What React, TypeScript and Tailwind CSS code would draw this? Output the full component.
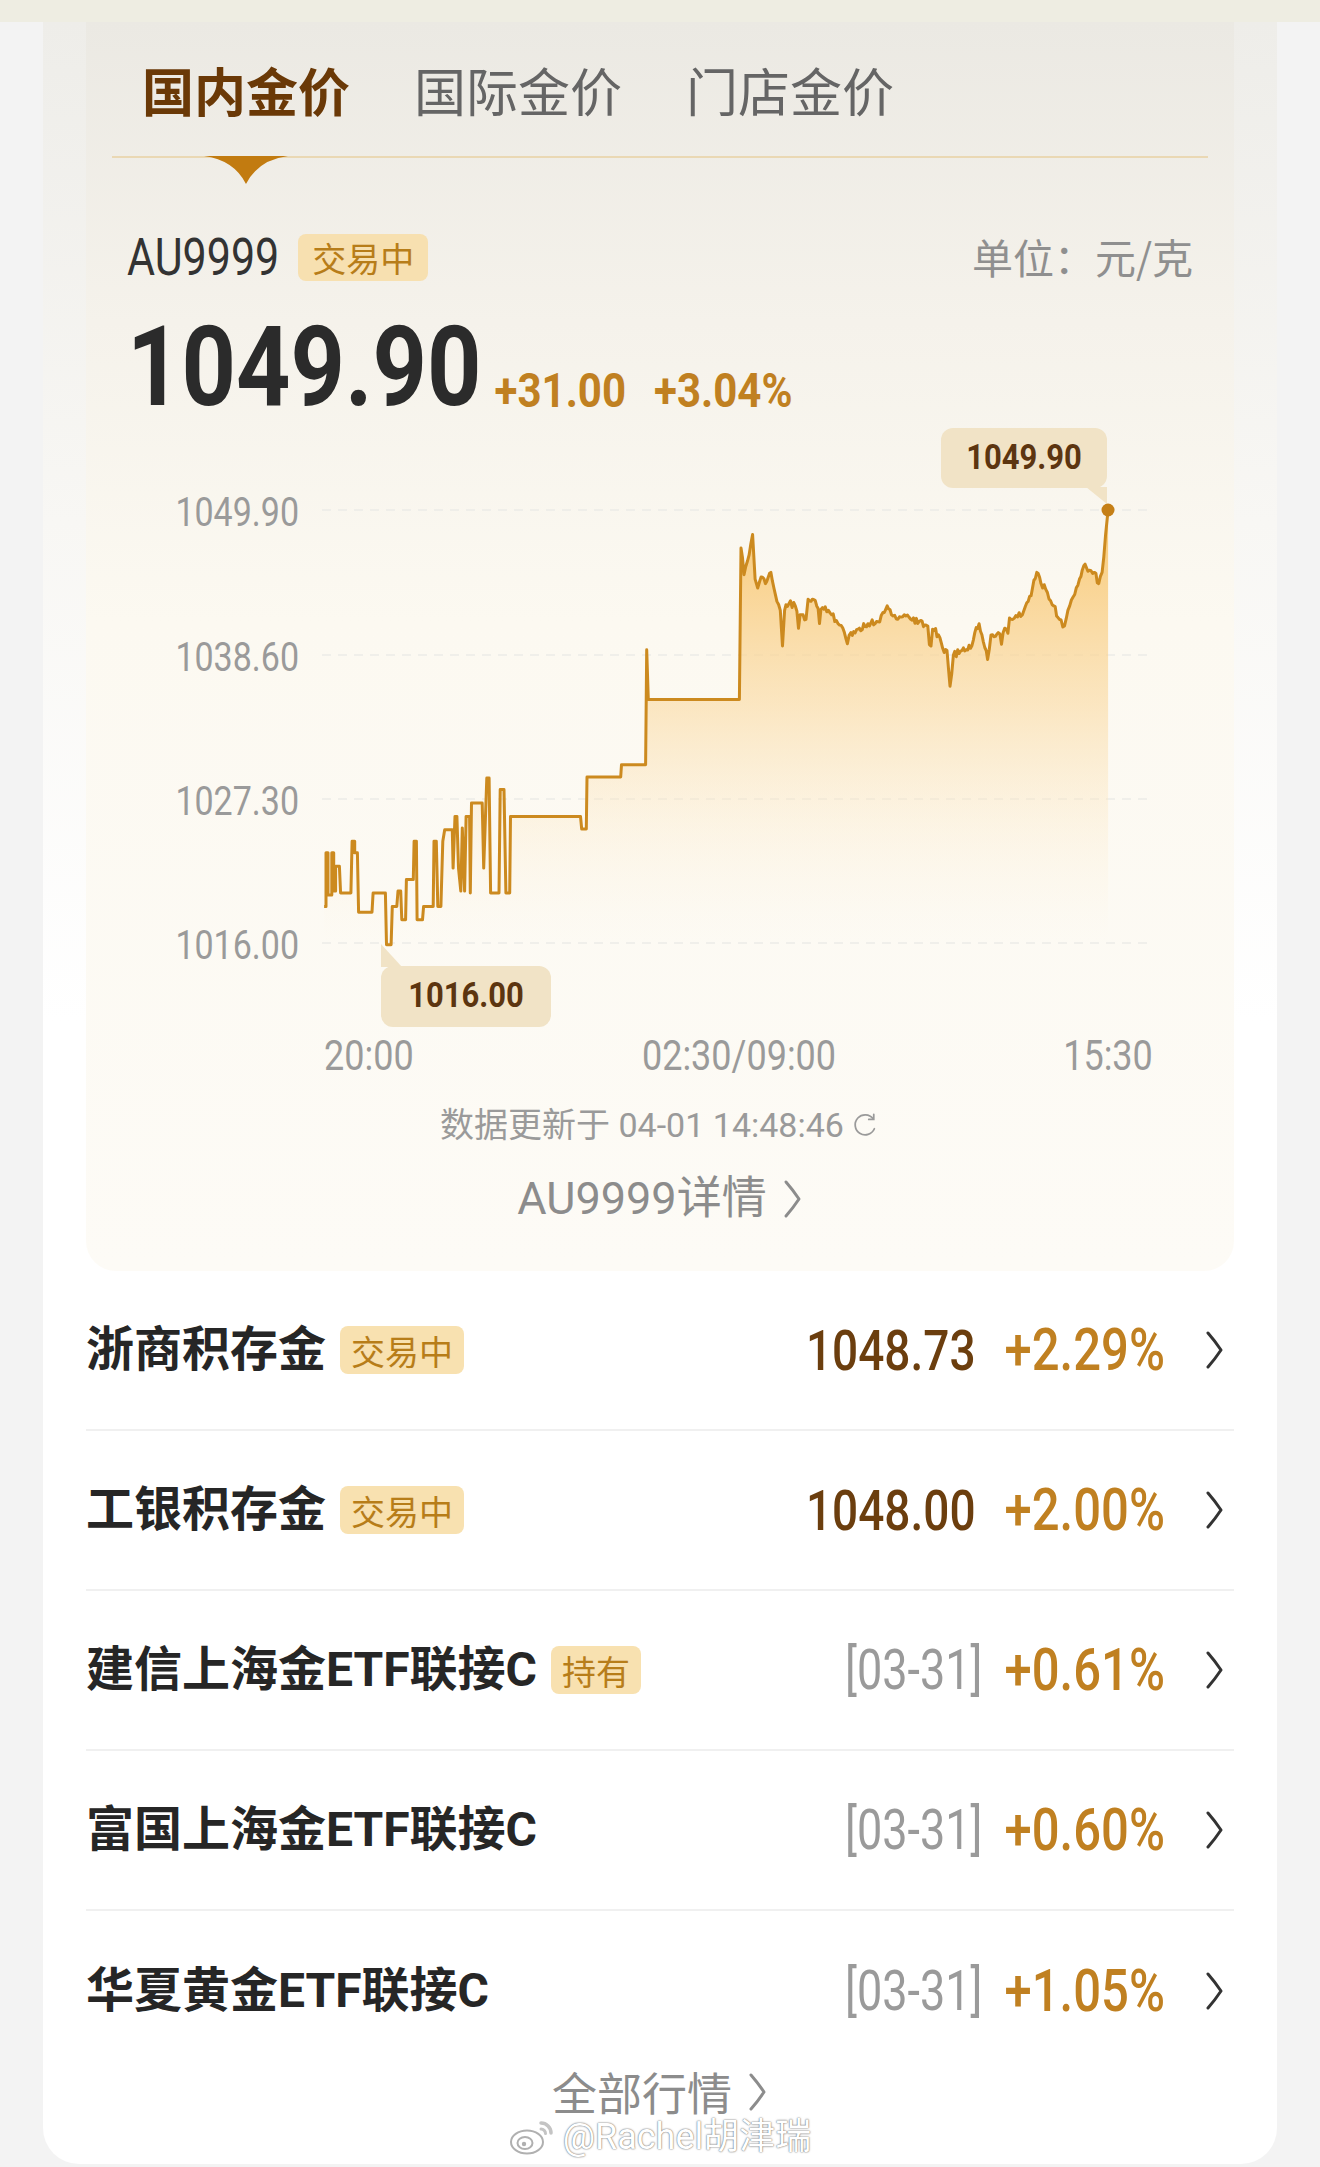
import React from "react";

const NUM = "font-['Roboto','Noto_Sans_CJK_SC',sans-serif]";
const CJK = "font-['Noto_Sans_CJK_SC','Noto_Sans',sans-serif]";

// chart points were read off the screenshot in two crops, mapped back to page px
const L = (zx: number, zy: number): [number, number] => [150 + zx / 2.613, 509 + (zy - 155) * 0.383];
const R = (zx: number, zy: number): [number, number] => [650 + zx / 2.34, 509 + (zy - 245) * 0.446];

const leftPts: [number, number][] = [
  [455, 1190], [460, 1190], [460, 1050], [465, 1050], [465, 1160], [475, 1160], [475, 1050], [480, 1050], [480, 1150],
  [485, 1150], [485, 1085], [495, 1085], [498, 1155], [525, 1155], [528, 1020], [535, 1020], [535, 1050], [542, 1050],
  [545, 1205], [580, 1205], [583, 1155], [615, 1155], [618, 1290], [630, 1290], [633, 1190], [645, 1190], [648, 1150],
  [655, 1150], [658, 1225], [668, 1225], [670, 1120], [688, 1120], [690, 1020], [696, 1020], [698, 1225], [712, 1225],
  [715, 1190], [740, 1190], [742, 1020], [748, 1020], [752, 1190], [760, 1190], [765, 1020], [770, 990], [790, 990],
  [792, 1090], [797, 955], [802, 955], [806, 1090], [812, 1150], [816, 985], [822, 1150], [826, 955], [835, 955],
  [837, 1155], [840, 920], [868, 920], [872, 1090], [880, 855], [886, 855], [890, 1155], [912, 1155], [915, 885],
  [925, 885], [930, 1155], [940, 1155], [942, 955], [1125, 955], [1128, 988], [1140, 988], [1142, 852], [1230, 852],
  [1232, 820], [1295, 820], [1298, 520], [1302, 650], [1540, 650],
];

const rightKeys: [number, number][] = [
  [213, 330], [220, 390], [228, 360], [240, 300], [246, 400], [252, 420], [260, 395], [270, 410], [283, 385], [290, 420],
  [297, 450], [305, 470], [310, 550], [315, 470], [325, 455], [340, 460], [355, 480], [365, 490], [370, 445], [380, 445],
  [390, 460], [410, 462], [425, 480], [440, 500], [455, 520], [462, 545], [470, 520], [490, 510], [510, 500], [530, 495],
  [545, 475], [555, 460], [565, 480], [580, 490], [595, 480], [610, 490], [630, 495], [650, 505], [665, 515], [675, 525],
  [685, 555], [695, 560], [702, 640], [710, 570], [730, 560], [750, 555], [760, 520], [770, 500], [780, 540], [790, 580],
  [798, 525], [815, 520], [830, 510], [845, 490], [860, 485], [875, 470], [885, 450], [895, 420], [905, 385], [915, 410],
  [930, 430], [945, 460], [958, 490], [970, 505], [978, 470], [990, 440], [1005, 400], [1015, 370], [1028, 380],
  [1040, 385], [1050, 410], [1058, 385], [1062, 350], [1066, 300], [1072, 245],
];

function buildPoints() {
  let seed = 11;
  const rnd = () => {
    seed = (seed * 16807) % 2147483647;
    return seed / 2147483647;
  };
  const pts: [number, number][] = leftPts.map(([x, y]) => L(x, y));
  const rk = rightKeys.map(([x, y]) => R(x, y));
  for (let i = 0; i < rk.length - 1; i++) {
    const [x0, y0] = rk[i];
    const [x1, y1] = rk[i + 1];
    pts.push([x0, y0]);
    const steps = Math.floor((x1 - x0) / 1.3);
    for (let s = 1; s < steps; s++) {
      const t = s / steps;
      let y = y0 + (y1 - y0) * t + (rnd() - 0.5) * 7;
      if (rnd() < 0.04) y += 8 + rnd() * 10;
      pts.push([x0 + (x1 - x0) * t, y]);
    }
  }
  pts.push(rk[rk.length - 1]);
  return pts;
}

function Chevron({ className = "", color = "#333" }: { className?: string; color?: string }) {
  return (
    <svg viewBox="0 0 20 38" className={className} fill="none">
      <path d="M3 2 Q10 10 16 19 Q10 28 3 36" stroke={color} strokeWidth="3" strokeLinecap="round" strokeLinejoin="round" />
    </svg>
  );
}

function Chart() {
  const pts = buildPoints();
  const d = pts.map((p, i) => `${i ? "L" : "M"}${p[0].toFixed(1)} ${p[1].toFixed(1)}`).join(" ");
  const first = pts[0];
  const last = pts[pts.length - 1];
  const area = `${d} L${last[0].toFixed(1)} 942 L${first[0].toFixed(1)} 942 Z`;
  const grid = [509, 654, 798, 942];
  const label = `${NUM} inline-block scale-y-[1.18] text-[34px] leading-[40px] text-[#9a9a9a]`;

  return (
    <div className="relative h-[660px]">
      <svg className="absolute inset-0" width={1147} height={660} viewBox="86 420 1147 660">
        <defs>
          <linearGradient id="goldFill" gradientUnits="userSpaceOnUse" x1="0" y1="509" x2="0" y2="942">
            <stop offset="0" stopColor="#f8c56c" stopOpacity="0.95" />
            <stop offset="0.45" stopColor="#fad9a0" stopOpacity="0.6" />
            <stop offset="1" stopColor="#fdf3e0" stopOpacity="0" />
          </linearGradient>
        </defs>
        {grid.map((y) => (
          <line key={y} x1="322" x2="1147" y1={y} y2={y} stroke="#ecebe8" strokeWidth="1.5" strokeDasharray="9 7" />
        ))}
        <path d={area} fill="url(#goldFill)" />
        <path d={d} fill="none" stroke="#cc8a1f" strokeWidth="3" strokeLinejoin="round" />
        <polygon points="1086,486 1107,486 1107,503" fill="#f1e3c6" />
        <polygon points="381,943 381,966 402,966" fill="#f1e3c6" />
        <circle cx="1108" cy="509" r="6.5" fill="#c57f16" />
      </svg>

      {[
        ["1049.90", "top-[71px]"],
        ["1038.60", "top-[216px]"],
        ["1027.30", "top-[360px]"],
        ["1016.00", "top-[504px]"],
      ].map(([t, top]) => (
        <div key={t} className={`absolute left-0 w-[213px] text-right ${top}`}>
          <span className={label}>{t}</span>
        </div>
      ))}

      <div className="absolute left-[855px] top-[7px] w-[166px] h-[60px] rounded-[12px] bg-[#f1e3c6] flex items-center justify-center">
        <span className={`${NUM} inline-block scale-y-[1.15] font-bold text-[31px] text-[#5c3510]`}>1049.90</span>
      </div>
      <div className="absolute left-[295px] top-[545px] w-[170px] h-[61px] rounded-[12px] bg-[#f1e3c6] flex items-center justify-center">
        <span className={`${NUM} inline-block scale-y-[1.15] font-bold text-[31px] text-[#5c3510]`}>1016.00</span>
      </div>

      <div className="absolute top-[615px] left-[238px]">
        <span className={`${label} text-[36px]`}>20:00</span>
      </div>
      <div className="absolute top-[615px] left-[553px] w-[200px] text-center">
        <span className={`${label} text-[36px]`}>02:30/09:00</span>
      </div>
      <div className="absolute top-[615px] left-[972px] w-[100px] text-center">
        <span className={`${label} text-[36px]`}>15:30</span>
      </div>
    </div>
  );
}

type Row = { name: string; badge?: string; price?: string; date?: string; pct: string };

const rows: Row[] = [
  { name: "浙商积存金", badge: "交易中", price: "1048.73", pct: "+2.29%" },
  { name: "工银积存金", badge: "交易中", price: "1048.00", pct: "+2.00%" },
  { name: "建信上海金ETF联接C", badge: "持有", date: "[03-31]", pct: "+0.61%" },
  { name: "富国上海金ETF联接C", date: "[03-31]", pct: "+0.60%" },
  { name: "华夏黄金ETF联接C", date: "[03-31]", pct: "+1.05%" },
];

function WeiboLogo() {
  return (
    <svg viewBox="0 0 48 38" className="w-[48px] h-[38px]" fill="none">
      <ellipse cx="18" cy="24" rx="16" ry="11.5" fill="#fff" stroke="#b0b0b0" strokeWidth="2" />
      <ellipse cx="16" cy="25" rx="7.5" ry="6" fill="#fff" stroke="#b0b0b0" strokeWidth="2" />
      <circle cx="15" cy="26" r="2.2" fill="#b0b0b0" />
      <path d="M32 5a10 10 0 0 1 10 10" stroke="#c4c4c4" strokeWidth="3.5" strokeLinecap="round" />
      <path d="M32 11a4.5 4.5 0 0 1 4.5 4.5" stroke="#c4c4c4" strokeWidth="3" strokeLinecap="round" />
    </svg>
  );
}

export default function App() {
  return (
    <div className="w-[1320px] h-[2167px] overflow-hidden bg-[#f3f3f3]">
      <div className="h-[22px] bg-[#eeede2]" />
      <div className="relative mx-[43px] h-[2142px] rounded-b-[36px] px-[43px] bg-[linear-gradient(180deg,#eeede9_0px,#f8f7f4_500px,#ffffff_1000px)]">
        {/* price panel */}
        <div className="rounded-b-[30px] pb-[42px] bg-[linear-gradient(180deg,#ebe9e3_0px,#f5f2eb_300px,#fcf9f1_600px,#fdfbf6_1246px)]">
          <div className={`h-[134px] pt-[2px] pl-[56px] flex items-center gap-[64px] ${CJK} text-[52px] leading-none`}>
            <span className="font-bold text-[#6a3907]">国内金价</span>
            <span className="text-[#656565]">国际金价</span>
            <span className="text-[#656565]">门店金价</span>
          </div>
          <div className="relative mx-[26px] h-[2px] bg-[#ead8b4]">
            <svg viewBox="0 0 84 28" className="absolute left-[92px] top-0 w-[84px] h-[28px]">
              <path d="M0 0 H84 Q54 4 42 28 Q30 4 0 0 Z" fill="#c27b10" />
            </svg>
          </div>

          <div className="mt-[74px] h-[50px] px-[41px] flex items-center">
            <span className={`${NUM} inline-block scale-y-[1.2] text-[43px] leading-none text-[#333]`}>AU9999</span>
            <span className={`ml-[19px] h-[47px] px-[14px] rounded-[8px] bg-[#f7e0b0] flex items-center ${CJK} text-[34px] text-[#b77d19]`}>
              交易中
            </span>
            <span className={`ml-auto ${CJK} text-[41px] text-[#8f8f8f]`}>单位：元/克</span>
          </div>

          <div className="mt-[28px] h-[117px] pt-[18px] px-[41px] flex items-baseline">
            <span className={`${NUM} inline-block origin-bottom scale-y-[1.18] font-bold text-[95px] leading-none text-[#2b2b2b]`}>1049.90</span>
            <span className={`ml-[13px] ${NUM} inline-block origin-bottom scale-y-[1.15] font-bold text-[42px] leading-none text-[#c08021]`}>+31.00</span>
            <span className={`ml-[28px] ${NUM} inline-block origin-bottom scale-y-[1.15] font-bold text-[42px] leading-none text-[#c08021]`}>+3.04%</span>
          </div>

          <div className="mt-[-6px]">
            <Chart />
          </div>

          <div className={`mt-[22px] h-[44px] flex items-center justify-center gap-[6px] ${NUM} text-[34px] text-[#9a9a9a]`}>
            <span>数据更新于 04-01 14:48:46</span>
            <svg viewBox="0 0 24 24" className="w-[30px] h-[30px]" fill="none" stroke="#9a9a9a" strokeWidth="1.4" strokeLinecap="round">
              <path d="M18.5 7A8 8 0 1 0 19.5 15" />
              <path d="M19 3.5v4h-4" />
            </svg>
          </div>

          <div className={`mt-[22px] h-[60px] flex items-center justify-center gap-[16px] ${NUM} text-[45px] text-[#8c8c8c]`}>
            <span>AU9999详情</span>
            <Chevron className="w-[20px] h-[40px]" color="#8c8c8c" />
          </div>
        </div>

        {/* list */}
        <div>
          {rows.map((r, i) => (
            <div
              key={r.name}
              className={`h-[160px] flex items-center ${i < rows.length - 1 ? "border-b-2 border-[#f0f0f0]" : ""}`}
            >
              <span className={`${NUM} font-bold text-[48px] leading-none text-[#262626]`}>{r.name}</span>
              {r.badge && (
                <span className={`ml-[14px] h-[48px] px-[11px] rounded-[8px] bg-[#f8e1b0] flex items-center ${CJK} text-[34px] text-[#b77d19]`}>
                  {r.badge}
                </span>
              )}
              <div className="ml-auto flex items-center">
                {r.price && (
                  <span className={`${NUM} inline-block scale-y-[1.22] font-medium text-[46px] leading-none text-[#6b3e0e]`}>{r.price}</span>
                )}
                {r.date && (
                  <span className={`${NUM} inline-block scale-y-[1.22] text-[45px] leading-none text-[#9a9a9a]`}>{r.date}</span>
                )}
                <span
                  className={`${r.price ? "ml-[29px]" : "ml-[22px]"} ${NUM} inline-block scale-y-[1.2] font-medium text-[49px] leading-none text-[#c08021]`}
                >
                  {r.pct}
                </span>
                <Chevron className="ml-[40px] mr-[9px] w-[20px] h-[38px]" color="#333" />
              </div>
            </div>
          ))}
        </div>

        <div className={`mt-[-9px] h-[60px] flex items-center justify-center gap-[16px] ${CJK} text-[45px] text-[#8c8c8c]`}>
          <span>全部行情</span>
          <Chevron className="w-[20px] h-[40px]" color="#8c8c8c" />
        </div>

        <div className="absolute left-0 right-0 top-[2088px] flex items-center justify-center gap-[6px]">
          <WeiboLogo />
          <span className={`${NUM} text-[36px] text-white [text-shadow:0_0_2px_rgba(0,0,0,0.55),0_0_1px_rgba(0,0,0,0.4)]`}>
            @Rachel胡津瑞
          </span>
        </div>
      </div>
    </div>
  );
}
